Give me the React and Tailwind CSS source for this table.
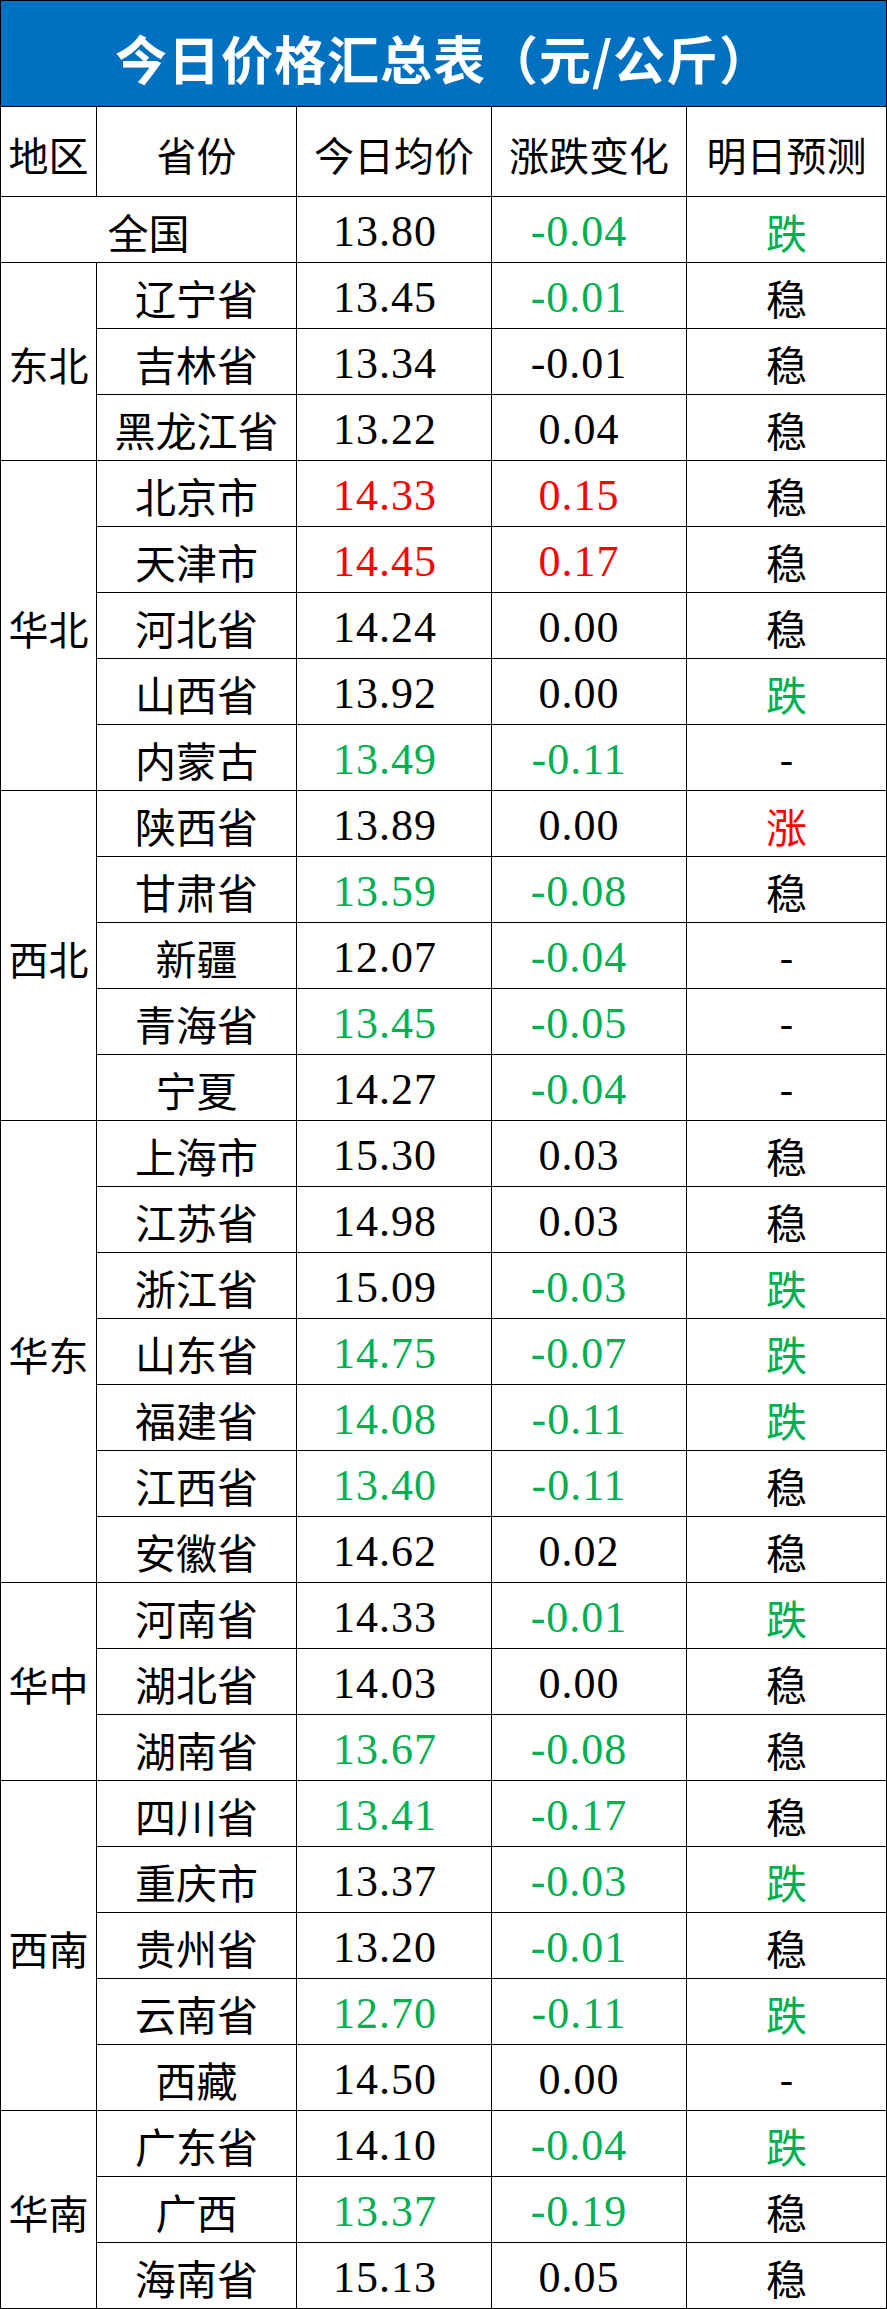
const cjk = "font-['Noto_Sans_CJK_SC',sans-serif]";
const num = "font-['Liberation_Serif','Noto_Sans_CJK_SC',serif]";

const colorOf = { g: 'text-[#00B050]', r: 'text-[#FF0000]', '': 'text-black' };

// [province, price, priceColor, change, changeColor, forecast, forecastColor]
const groups = [
  {
    region: '东北',
    rows: [
      ['辽宁省', '13.45', '', '-0.01', 'g', '稳', ''],
      ['吉林省', '13.34', '', '-0.01', '', '稳', ''],
      ['黑龙江省', '13.22', '', '0.04', '', '稳', ''],
    ],
  },
  {
    region: '华北',
    rows: [
      ['北京市', '14.33', 'r', '0.15', 'r', '稳', ''],
      ['天津市', '14.45', 'r', '0.17', 'r', '稳', ''],
      ['河北省', '14.24', '', '0.00', '', '稳', ''],
      ['山西省', '13.92', '', '0.00', '', '跌', 'g'],
      ['内蒙古', '13.49', 'g', '-0.11', 'g', '-', ''],
    ],
  },
  {
    region: '西北',
    rows: [
      ['陕西省', '13.89', '', '0.00', '', '涨', 'r'],
      ['甘肃省', '13.59', 'g', '-0.08', 'g', '稳', ''],
      ['新疆', '12.07', '', '-0.04', 'g', '-', ''],
      ['青海省', '13.45', 'g', '-0.05', 'g', '-', ''],
      ['宁夏', '14.27', '', '-0.04', 'g', '-', ''],
    ],
  },
  {
    region: '华东',
    rows: [
      ['上海市', '15.30', '', '0.03', '', '稳', ''],
      ['江苏省', '14.98', '', '0.03', '', '稳', ''],
      ['浙江省', '15.09', '', '-0.03', 'g', '跌', 'g'],
      ['山东省', '14.75', 'g', '-0.07', 'g', '跌', 'g'],
      ['福建省', '14.08', 'g', '-0.11', 'g', '跌', 'g'],
      ['江西省', '13.40', 'g', '-0.11', 'g', '稳', ''],
      ['安徽省', '14.62', '', '0.02', '', '稳', ''],
    ],
  },
  {
    region: '华中',
    rows: [
      ['河南省', '14.33', '', '-0.01', 'g', '跌', 'g'],
      ['湖北省', '14.03', '', '0.00', '', '稳', ''],
      ['湖南省', '13.67', 'g', '-0.08', 'g', '稳', ''],
    ],
  },
  {
    region: '西南',
    rows: [
      ['四川省', '13.41', 'g', '-0.17', 'g', '稳', ''],
      ['重庆市', '13.37', '', '-0.03', 'g', '跌', 'g'],
      ['贵州省', '13.20', '', '-0.01', 'g', '稳', ''],
      ['云南省', '12.70', 'g', '-0.11', 'g', '跌', 'g'],
      ['西藏', '14.50', '', '0.00', '', '-', ''],
    ],
  },
  {
    region: '华南',
    rows: [
      ['广东省', '14.10', '', '-0.04', 'g', '跌', 'g'],
      ['广西', '13.37', 'g', '-0.19', 'g', '稳', ''],
      ['海南省', '15.13', '', '0.05', '', '稳', ''],
    ],
  },
];

const spanClass = { 3: 'row-span-3', 5: 'row-span-5', 7: 'row-span-7' };

function Cell({ className = '', children }) {
  return (
    <div className={`bg-white flex items-center justify-center leading-none ${className}`}>
      {children}
    </div>
  );
}

function Row({ r }) {
  const [name, price, pc, change, cc, fc, fcc] = r;
  return (
    <>
      <Cell className={`${cjk} text-[41px] pt-1`}>{name}</Cell>
      <Cell className={`${num} text-[44px] tracking-[1px] pr-[18px] pt-1 ${colorOf[pc]}`}>{price}</Cell>
      <Cell className={`${num} text-[44px] tracking-[1px] pr-[20px] pt-1 ${colorOf[cc]}`}>{change}</Cell>
      <Cell className={`${fc === '-' ? num + ' text-[40px]' : cjk + ' text-[41px]'} pt-1 ${colorOf[fcc]}`}>
        {fc}
      </Cell>
    </>
  );
}

export default function App() {
  return (
    <div className="w-[887px] bg-white">
      <div className="grid w-[887px] grid-cols-[95px_199px_194px_194px_199px] grid-rows-[105px_89px] auto-rows-[65px] gap-px bg-black p-px">
        <div className={`col-span-5 bg-[#0070C0] flex items-center justify-center pt-2 ${cjk} text-[52px] font-bold text-white tracking-[1px] leading-none`}>
          今日价格汇总表（元/公斤）
        </div>

        {['地区', '省份', '今日均价', '涨跌变化', '明日预测'].map((h) => (
          <Cell key={h} className={`${cjk} text-[40px] pt-1`}>{h}</Cell>
        ))}

        <Cell className={`col-span-2 ${cjk} text-[41px] pt-1`}>全国</Cell>
        <Cell className={`${num} text-[44px] tracking-[1px] pr-[18px] pt-1`}>13.80</Cell>
        <Cell className={`${num} text-[44px] tracking-[1px] pr-[20px] pt-1 text-[#00B050]`}>-0.04</Cell>
        <Cell className={`${cjk} text-[41px] pt-1 text-[#00B050]`}>跌</Cell>

        {groups.map((g) => (
          <React.Fragment key={g.region}>
            <Cell className={`col-start-1 ${spanClass[g.rows.length]} ${cjk} text-[40px] pt-1`}>{g.region}</Cell>
            {g.rows.map((r) => (
              <Row key={r[0]} r={r} />
            ))}
          </React.Fragment>
        ))}
      </div>
    </div>
  );
}

import React from 'react';
